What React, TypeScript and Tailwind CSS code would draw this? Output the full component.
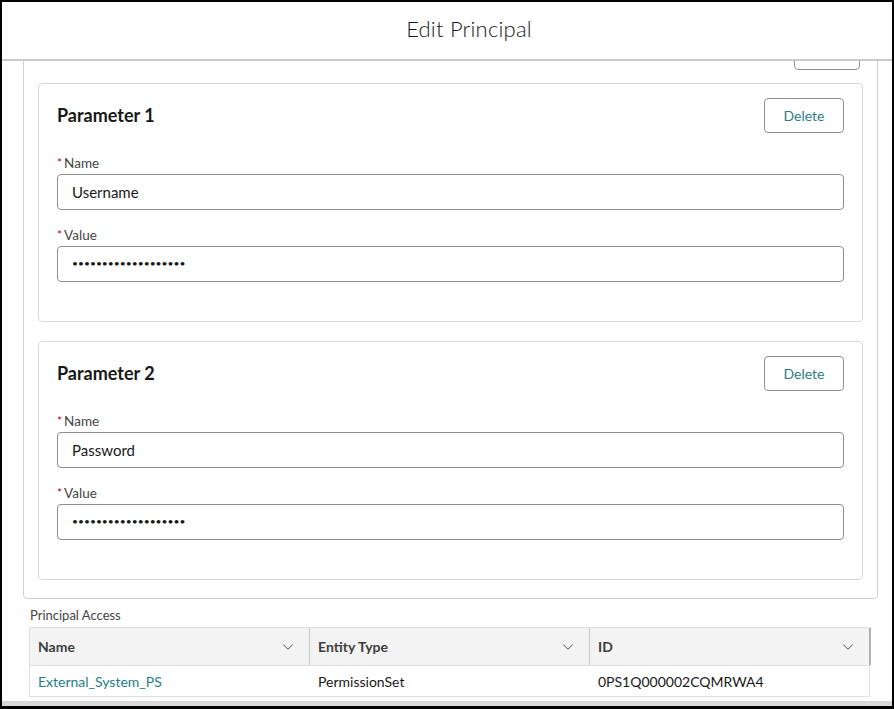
import { ChevronDown } from "lucide-react";

const font = { fontFamily: "Lato, 'Open Sans', sans-serif" };

const parameters = [
  { title: "Parameter 1", name: "Username" },
  { title: "Parameter 2", name: "Password" },
];

const columns = ["Name", "Entity Type", "ID"];

function Field({ label, value, masked }: { label: string; value: string; masked?: boolean }) {
  return (
    <div className="flex flex-col">
      <label className="flex items-center h-[16px] mt-[1px] text-[13.5px] text-[#444444]">
        <span className="text-[#ba0517] mr-[2px] text-[12px]">*</span>
        {label}
      </label>
      <div
        className={`mt-[3px] h-[36px] rounded-[4px] border border-[#8e8e8e] bg-white flex items-center px-[14px] text-[#181818] ${
          masked ? "text-[10.3px]" : "text-[15px]"
        }`}
      >
        {value}
      </div>
    </div>
  );
}

function ParameterCard({ title, name }: { title: string; name: string }) {
  return (
    <div className="rounded-[4px] border border-[#d8d8d8] bg-white pt-[14px] pb-[39px] px-[18px]">
      <div className="flex items-center justify-between h-[35px]">
        <h2 className="text-[18px] font-bold text-[#181818]">{title}</h2>
        <button className="h-[35px] w-[80px] rounded-[4px] border border-[#8e8e8e] bg-white text-[14px] text-[#2b7c86]">
          Delete
        </button>
      </div>
      <div className="mt-[21px]">
        <Field label="Name" value={name} />
      </div>
      <div className="mt-[16px]">
        <Field label="Value" value="•••••••••••••••••••" masked />
      </div>
    </div>
  );
}

export default function App() {
  return (
    <div
      style={font}
      className="w-[894px] h-[709px] border-2 border-b-[3px] border-black bg-white flex flex-col overflow-hidden"
    >
      {/* Modal header */}
      <header className="h-[59px] shrink-0 border-b-2 border-[#c9c9c9] flex items-center justify-center pl-[44px] pb-[5px]">
        <h1 className="text-[22px] font-light text-[#181818] tracking-[0.2px]">Edit Principal</h1>
      </header>

      {/* Scrolled body */}
      <div className="flex-1 flex flex-col overflow-hidden">
        <div className="pl-[21px] pr-[14px]">
          <div className="-mt-[26px] rounded-b-[4px] border border-[#d0d0d0] px-[14px] pb-[18px]">
            <div className="flex justify-end pr-[3px]">
              <button className="h-[34px] w-[66px] rounded-[4px] border border-[#8e8e8e] bg-white" />
            </div>
            <div className="mt-[13px] flex flex-col gap-[19px]">
              {parameters.map((p) => (
                <ParameterCard key={p.title} title={p.title} name={p.name} />
              ))}
            </div>
          </div>
        </div>

        {/* Principal Access */}
        <div className="pl-[27px] pr-[22px] mt-[8px]">
          <div className="text-[13px] text-[#444444] h-[16px] leading-[16px] pl-[1px]">Principal Access</div>
          <div className="mt-[4px] border border-[#e0e0e0] border-r-0">
            <div className="grid grid-cols-[279px_280px_280px_2px] h-[38px] bg-[#f3f3f3] border-b border-[#dddddd]">
              {columns.map((c, i) => (
                <div
                  key={c}
                  className={`flex items-center justify-between pl-[8px] pr-[12px] ${
                    i > 0 ? "border-l border-[#c9c9c9]" : ""
                  }`}
                >
                  <span className="text-[14px] font-bold text-[#3e3e3c]">{c}</span>
                  <ChevronDown size={18} strokeWidth={1.4} className="text-[#706e6b]" />
                </div>
              ))}
              <div className="bg-[#b0b0b0]" />
            </div>
            <div className="grid grid-cols-[279px_280px_280px_2px] h-[30px] items-center text-[14px]">
              <div className="pl-[8px] text-[#1f7e87]">External_System_PS</div>
              <div className="pl-[9px] text-[#181818]">PermissionSet</div>
              <div className="pl-[9px] text-[#181818]">0PS1Q000002CQMRWA4</div>
              <div className="h-full bg-[#e0e0e0] w-[1px]" />
            </div>
          </div>
        </div>

        <div className="mt-auto h-[5px] bg-[#d9d9d9]" />
      </div>
    </div>
  );
}
